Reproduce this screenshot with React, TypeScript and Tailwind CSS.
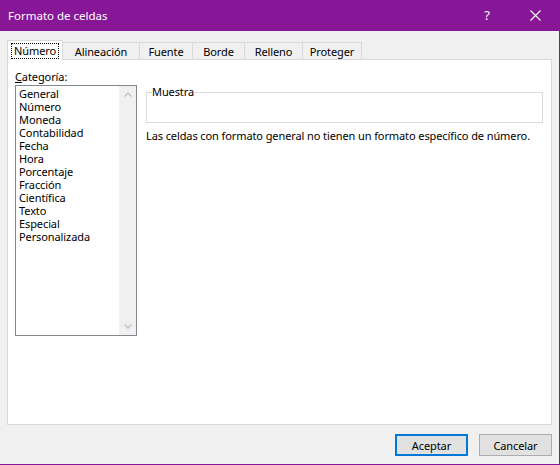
import React from "react";

const font = { fontFamily: '"Noto Sans", "Segoe UI", sans-serif' };

const categories = [
  "General",
  "Número",
  "Moneda",
  "Contabilidad",
  "Fecha",
  "Hora",
  "Porcentaje",
  "Fracción",
  "Científica",
  "Texto",
  "Especial",
  "Personalizada",
];

const tabs = [
  { label: "Alineación", w: "w-[77px]" },
  { label: "Fuente", w: "w-[53px]" },
  { label: "Borde", w: "w-[52px]" },
  { label: "Relleno", w: "w-[58px]" },
  { label: "Proteger", w: "w-[59px]" },
];

export default function App() {
  return (
    <div
      className="w-[560px] h-[465px] box-border bg-[#f0f0f0] border-r border-b border-[#881798] flex flex-col text-[11px] tracking-[-0.1px] text-black overflow-hidden"
      style={font}
    >
      {/* Title bar */}
      <div className="h-[31px] shrink-0 bg-[#881798] flex items-center text-white">
        <div className="pl-[8px] text-[11.5px] leading-none flex-1 tracking-normal">Formato de celdas</div>
        <div className="w-[20px] text-center text-[13px] leading-none mr-[33px]">?</div>
        <svg width="11" height="11" viewBox="0 0 11 11" className="mr-[18px]">
          <path d="M0.5 0.5 L10.5 10.5 M10.5 0.5 L0.5 10.5" stroke="white" strokeWidth="1.1" />
        </svg>
      </div>

      {/* Tabs */}
      <div className="mt-[9px] ml-[7px] flex items-end h-[19px] shrink-0 relative z-10">
        <div className="w-[56px] h-[20px] -mb-px bg-white border border-b-0 border-[#d9d9d9] flex items-center justify-center">
          <span className="border border-dotted border-black px-[2px] leading-[14px]">Número</span>
        </div>
        {tabs.map((t) => (
          <div
            key={t.label}
            className={`${t.w} h-[17px] bg-[#f0f0f0] border border-l-0 border-b-0 border-[#d9d9d9] flex items-center justify-center leading-none`}
          >
            {t.label}
          </div>
        ))}
      </div>

      {/* Panel */}
      <div className="ml-[7px] w-[545px] h-[366px] shrink-0 bg-white border border-[#d9d9d9] flex">
        <div className="ml-[7px] mt-[10px] flex flex-col">
          <div className="leading-[13px] h-[13px]">
            <span className="underline">C</span>ategoría:
          </div>
          <div className="mt-[2px] w-[122px] h-[251px] border border-[#828790] flex">
            <div className="flex-1 pl-[3px] pt-[1px] flex flex-col">
              {categories.map((c) => (
                <div key={c} className="leading-[13px] h-[13px] whitespace-nowrap">
                  {c}
                </div>
              ))}
            </div>
            <div className="w-[17px] bg-[#f0f0f0] flex flex-col items-center justify-between py-[6px]">
              <svg width="8" height="5" viewBox="0 0 8 5">
                <path d="M0.5 4.5 L4 1 L7.5 4.5" stroke="#c2c2c2" strokeWidth="1.5" fill="none" />
              </svg>
              <svg width="8" height="5" viewBox="0 0 8 5">
                <path d="M0.5 0.5 L4 4 L7.5 0.5" stroke="#c2c2c2" strokeWidth="1.5" fill="none" />
              </svg>
            </div>
          </div>
        </div>
        <div className="ml-[9px] mt-[32px] w-[397px] flex flex-col">
          <div className="h-[31px] border border-[#dcdcdc] relative">
            <span className="absolute left-[5px] -top-[8px] bg-white pr-[1px] leading-[14px]">Muestra</span>
          </div>
          <div className="mt-[6px] leading-[13px] whitespace-nowrap">
            Las celdas con formato general no tienen un formato específico de número.
          </div>
        </div>
      </div>

      {/* Buttons */}
      <div className="mt-[9px] flex justify-end pr-[7px] gap-[11px]">
        <button className="w-[73px] h-[22px] bg-[#e1e1e1] border-2 border-[#0078d7] flex items-center justify-center leading-none">
          Aceptar
        </button>
        <button className="w-[73px] h-[22px] bg-[#e1e1e1] border border-[#adadad] flex items-center justify-center leading-none">
          Cancelar
        </button>
      </div>
    </div>
  );
}
